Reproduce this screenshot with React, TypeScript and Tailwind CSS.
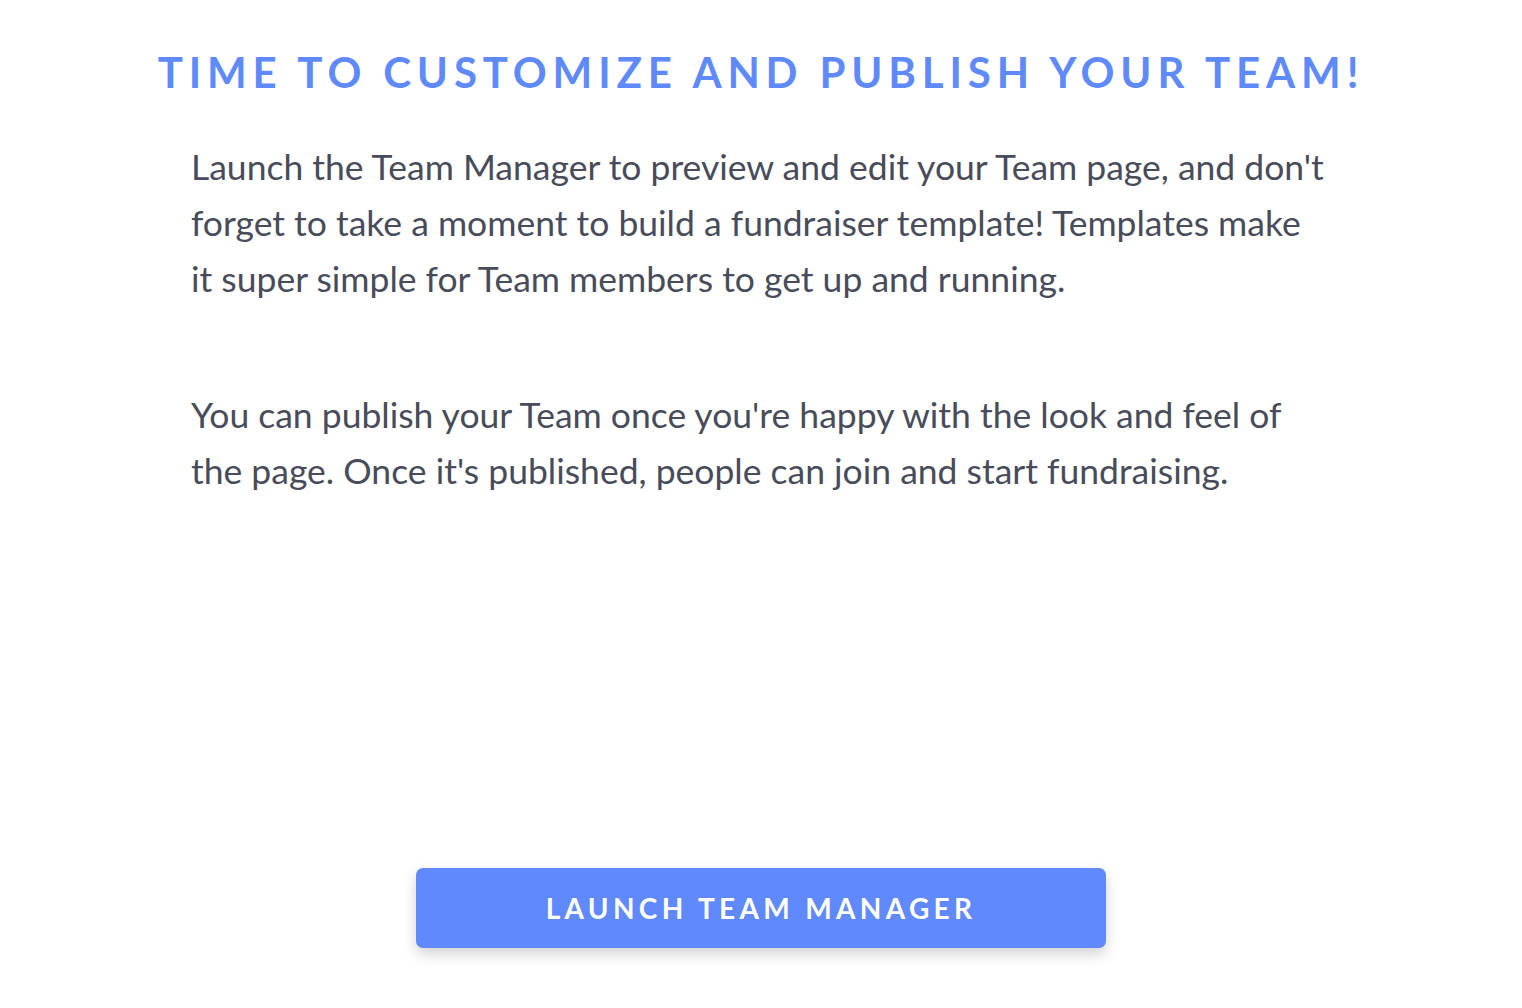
export default function App() {
  return (
    <div className="w-[1522px] h-[1008px] bg-white flex flex-col items-center font-['Lato',sans-serif]">
      <h1 className="mt-[46px] text-[42px] leading-[52px] font-bold tracking-[5.85px] text-[#5f8afe] whitespace-nowrap">
        TIME TO CUSTOMIZE AND PUBLISH YOUR TEAM!
      </h1>
      <div className="w-[1522px] pl-[191px] pr-[193px] mt-[41px] text-[35.5px] leading-[56px] text-[#484c5a]">
        <p>
          Launch the Team Manager to preview and edit your Team page, and don't forget to take a moment to build a fundraiser template! Templates make it super simple for Team members to get up and running.
        </p>
        <p className="mt-[80px]">
          You can publish your Team once you're happy with the look and feel of the page. Once it's published, people can join and start fundraising.
        </p>
      </div>
      <button className="mt-[369px] w-[690px] h-[80px] rounded-[7px] bg-[#5f89fd] text-white text-[28px] font-bold tracking-[0.155em] shadow-[0_6px_14px_rgba(0,0,0,0.18)]">
        LAUNCH TEAM MANAGER
      </button>
    </div>
  );
}
